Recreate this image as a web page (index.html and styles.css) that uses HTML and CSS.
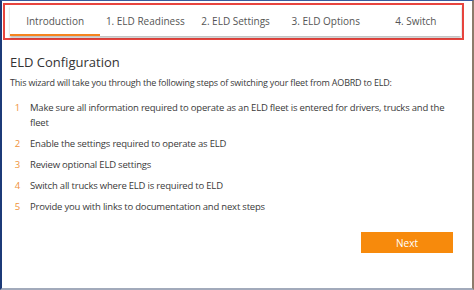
FILE: index.html
```html
<!DOCTYPE html>
<html>
<head>
<meta charset="utf-8">
<link rel="stylesheet" href="styles.css">
</head>
<body>
<div class="frame">
  <div class="tabs-outline">
    <nav class="tabs">
      <div class="tab active">Introduction</div>
      <div class="tab">1. ELD Readiness</div>
      <div class="tab">2. ELD Settings</div>
      <div class="tab">3. ELD Options</div>
      <div class="tab">4. Switch</div>
    </nav>
  </div>
  <main class="content">
    <h1 class="title">ELD Configuration</h1>
    <p class="intro">This wizard will take you through the following steps of switching your fleet from AOBRD to ELD:</p>
    <ol class="steps">
      <li><span class="num">1</span><span class="txt">Make sure all information required to operate as an ELD fleet is entered for drivers, trucks and the fleet</span></li>
      <li><span class="num">2</span><span class="txt">Enable the settings required to operate as ELD</span></li>
      <li><span class="num">3</span><span class="txt">Review optional ELD settings</span></li>
      <li><span class="num">4</span><span class="txt">Switch all trucks where ELD is required to ELD</span></li>
      <li><span class="num">5</span><span class="txt">Provide you with links to documentation and next steps</span></li>
    </ol>
    <div class="actions">
      <button class="next">Next</button>
    </div>
  </main>
</div>
</body>
</html>
```
FILE: styles.css
```css
html, body {
  margin: 0;
  padding: 0;
  background: #ffffff;
}
body {
  font-family: "Open Sans", "Liberation Sans", sans-serif;
  color: #3a3a3a;
}
.frame {
  box-sizing: border-box;
  width: 474px;
  height: 290px;
  border-top: 1px solid #3a5a9c;
  border-left: 2px solid #1c3a78;
  border-right: 2px solid #8c7c6c;
  border-bottom: 2px solid #a2aabb;
  display: flex;
  flex-direction: column;
}
.tabs-outline {
  margin: 2px 8px 0 1px;
  border: 2px solid #e8453e;
  padding: 0 0 2px 5px;
}
.tabs {
  display: flex;
  background: #fff;
  box-shadow: 0 2px 2px rgba(0,0,0,0.25);
  margin-right: 1px;
}
.tab {
  width: 91px;
  text-align: center;
  font-size: 10px;
  color: #555;
  height: 31px;
  line-height: 33px;
  box-sizing: border-box;
}
.tab.active {
  border-bottom: 2px solid #f5841f;
}
.content {
  padding: 0 19px 0 8px;
}
.title {
  font-weight: 400;
  font-size: 13px;
  margin: 11px 0 0 0;
  color: #333;
  line-height: 22px;
}
.intro {
  font-size: 9px;
  letter-spacing: -0.2px;
  margin: 3px 0 0 0;
  line-height: 14px;
}
.steps {
  list-style: none;
  margin: 10px 0 0 0;
  padding: 0;
  font-size: 9.5px;
  letter-spacing: -0.2px;
}
.steps li {
  display: flex;
  line-height: 15px;
  margin-bottom: 6px;
}
.num {
  color: #f0923a;
  width: 20px;
  text-align: right;
  padding-right: 10px;
  box-sizing: border-box;
  flex: none;
}
.txt {
  max-width: 415px;
}
.actions {
  display: flex;
  justify-content: flex-end;
  margin-top: 18px;
}
.next {
  width: 92px;
  height: 21px;
  background: #f78a0c;
  border: none;
  color: #fff;
  font-family: "Open Sans", "Liberation Sans", sans-serif;
  font-size: 10px;
  padding: 0;
}
```
